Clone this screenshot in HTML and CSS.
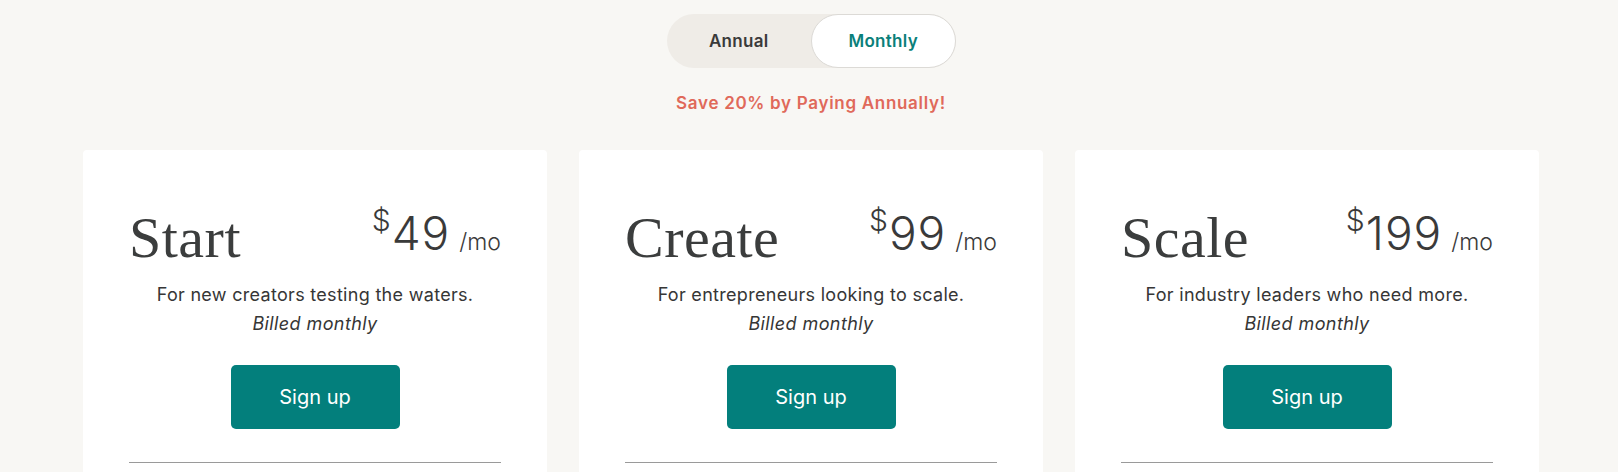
FILE: index.html
```html
<!DOCTYPE html>
<html lang="en">
<head>
<meta charset="utf-8">
<title>Pricing</title>
<link rel="stylesheet" href="styles.css">
</head>
<body>
<main class="page">
  <div class="toggle">
    <button class="toggle-opt">Annual</button>
    <button class="toggle-opt is-active">Monthly</button>
  </div>
  <p class="save">Save 20% by Paying Annually!</p>
  <section class="plans">
    <article class="plan">
      <div class="plan-head">
        <h2 class="plan-name">Start</h2>
        <div class="price"><span class="cur">$</span><span class="amount">49<span class="per">/mo</span></span></div>
      </div>
      <p class="desc">For new creators testing the waters.</p>
      <p class="billed">Billed monthly</p>
      <a class="signup" href="#">Sign up</a>
      <hr class="rule">
    </article>
    <article class="plan">
      <div class="plan-head">
        <h2 class="plan-name">Create</h2>
        <div class="price"><span class="cur">$</span><span class="amount">99<span class="per">/mo</span></span></div>
      </div>
      <p class="desc">For entrepreneurs looking to scale.</p>
      <p class="billed">Billed monthly</p>
      <a class="signup" href="#">Sign up</a>
      <hr class="rule">
    </article>
    <article class="plan">
      <div class="plan-head">
        <h2 class="plan-name">Scale</h2>
        <div class="price"><span class="cur">$</span><span class="amount">199<span class="per">/mo</span></span></div>
      </div>
      <p class="desc">For industry leaders who need more.</p>
      <p class="billed">Billed monthly</p>
      <a class="signup" href="#">Sign up</a>
      <hr class="rule">
    </article>
  </section>
</main>
</body>
</html>
```
FILE: styles.css
```css
* { box-sizing: border-box; }
html, body { margin: 0; }
body {
  background: #f8f7f4;
  font-family: "Inter", "Noto Sans", sans-serif;
  color: #363636;
  overflow: hidden;
}
.page {
  padding: 14px 0 0 4px;
  display: flex;
  flex-direction: column;
  align-items: center;
}
.toggle {
  display: flex;
  width: 289px;
  height: 54px;
  background: #efece7;
  border-radius: 27px;
}
.toggle-opt {
  flex: 1;
  border: 1px solid transparent;
  background: transparent;
  border-radius: 27px;
  font-family: inherit;
  font-size: 17px;
  font-weight: 600;
  letter-spacing: 0.3px;
  color: #3a3a3a;
  padding: 0;
  cursor: pointer;
}
.toggle-opt.is-active {
  background: #fff;
  border-color: #dcdad6;
  color: #0a7f7a;
}
.save {
  margin: 25px 0 0;
  font-size: 17px;
  line-height: 20px;
  font-weight: 600;
  color: #e0695a;
  letter-spacing: 0.7px;
}
.plans {
  margin-top: 37px;
  width: 1456px;
  display: grid;
  grid-template-columns: repeat(3, 1fr);
  gap: 32px;
}
.plan {
  background: #fff;
  border-radius: 4px;
  padding: 59px 46px 0;
  height: 420px;
  display: flex;
  flex-direction: column;
  align-items: center;
}
.plan-head {
  width: 100%;
  display: flex;
  justify-content: space-between;
  align-items: flex-start;
}
.plan-name {
  margin: 0;
  font-family: "Liberation Serif", serif;
  font-weight: 400;
  font-size: 58px;
  line-height: 57px;
  color: #3b3d3d;
  letter-spacing: 0.5px;
}
.price {
  display: flex;
  align-items: flex-start;
  color: #3a3a3a;
  font-weight: 300;
}
.cur {
  font-size: 30px;
  line-height: 1;
  margin-top: -4px;
  margin-right: 1px;
}
.amount {
  font-size: 46px;
  line-height: 1;
  margin-top: 1px;
  letter-spacing: 1px;
}
.per {
  font-size: 23px;
  margin-left: 9px;
  letter-spacing: 0;
}
.desc {
  margin: 14px 0 0;
  font-size: 18px;
  line-height: 29px;
  letter-spacing: 0.3px;
}
.billed {
  margin: 0;
  font-size: 18px;
  line-height: 29px;
  font-style: italic;
  letter-spacing: 0.4px;
}
.signup {
  margin-top: 27px;
  width: 169px;
  height: 64px;
  display: flex;
  align-items: center;
  justify-content: center;
  background: #037f7c;
  color: #fff;
  border-radius: 5px;
  text-decoration: none;
  font-size: 20px;
}
.rule {
  margin: 33px 0 0;
  width: 100%;
  border: 0;
  border-top: 1px solid #9a9a9a;
}
```
